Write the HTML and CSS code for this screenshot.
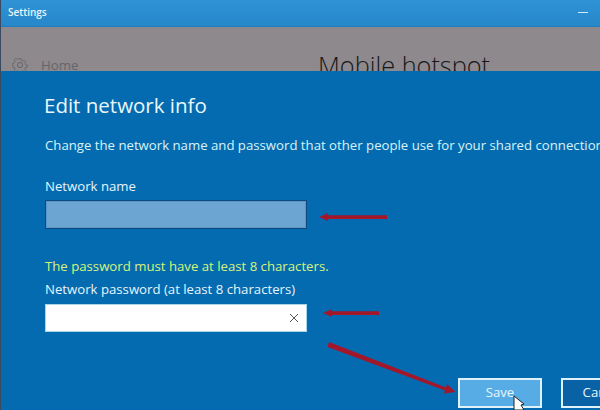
FILE: index.html
```html
<!DOCTYPE html>
<html lang="en">
<head>
<meta charset="utf-8">
<title>Settings</title>
<link rel="stylesheet" href="styles.css">
</head>
<body>
<div class="window">
  <header class="titlebar">
    <span class="app-name">Settings</span>
    <span class="minimize"></span>
  </header>
  <section class="backdrop">
    <div class="home">
      <svg class="gear" width="16" height="16" viewBox="0 0 16 16" fill="none" stroke="#66666a" stroke-width="1">
        <circle cx="8" cy="8" r="2.6"/>
        <path d="M6.8 1h2.4l.4 2 1.500.7 1.800-1.100 1.600 1.700-1.100 1.700.7 1.600 2 .4v2.300l-2 .4-.7 1.600 1.100 1.700-1.600 1.700-1.800-1.100-1.500.7-.4 2H6.800l-.4-2-1.500-.7-1.800 1.100-1.600-1.700 1.100-1.700-.7-1.600-2-.4V6l2-.4.7-1.600-1.100-1.700 1.600-1.700 1.800 1.100 1.500-.7z" transform="translate(.8 .8) scale(.9)"/>
      </svg>
      <span class="home-label">Home</span>
    </div>
    <h2 class="page-title">Mobile hotspot</h2>
  </section>
  <main class="dialog">
    <h1 class="dialog-title">Edit network info</h1>
    <p class="intro">Change the network name and password that other people use for your shared connection.</p>
    <label class="field-label">Network name</label>
    <div class="input input-name"></div>
    <p class="warning">The password must have at least 8 characters.</p>
    <label class="field-label field-label-tight">Network password (at least 8 characters)</label>
    <div class="input input-password">
      <svg width="10" height="10" viewBox="0 0 10 10" stroke="#555" stroke-width="1"><path d="M1 1l8 8M9 1l-8 8"/></svg>
    </div>
    <div class="actions">
      <button class="btn btn-save">Save</button>
      <button class="btn btn-cancel">Cancel</button>
    </div>
  </main>
  <svg class="annotations" width="600" height="410" viewBox="0 0 600 410">
    <g fill="#a3172b" stroke="none">
      <path d="M319 217l9-4v2.200h59v3.800h-59v2z"/>
      <path d="M323 313l9-4v2.200h47v3.800h-47v2z"/>
      <path d="M327.500 347l1.500-5 117 45.500 1-3.500 8.500 8-11.500 1.500 1-3z"/>
    </g>
    <path class="cursor" d="M514 396v14h10l-3-5 3-1z" fill="#fff" stroke="#222" stroke-width="1"/>
  </svg>
</div>
</body>
</html>
```

FILE: styles.css
```css
html, body {
  margin: 0;
  padding: 0;
}

body {
  width: 600px;
  height: 410px;
  overflow: hidden;
  font-family: "Open Sans", "Noto Sans", sans-serif;
}

.window {
  position: relative;
  width: 600px;
  height: 410px;
  overflow: hidden;
  display: flex;
  flex-direction: column;
  background: #056bb0;
  border-left: 1px solid #3a4a60;
  box-sizing: border-box;
}

.titlebar {
  height: 27px;
  flex: none;
  display: flex;
  align-items: center;
  justify-content: space-between;
  padding: 0 12px 2px 7px;
  box-sizing: border-box;
  background: linear-gradient(#2f93d6, #2687c9);
  border-bottom: 1px solid #1f7cbd;
}

.app-name {
  color: #e8f4fb;
  font-size: 10px;
  font-weight: 600;
}

.minimize {
  width: 10px;
  height: 1px;
  background: #cfeaf8;
}

.backdrop {
  height: 44px;
  flex: none;
  overflow: hidden;
  background: #8d898c;
  display: flex;
  padding: 28px 0 0 11px;
  box-sizing: border-box;
}

.home {
  display: flex;
  align-items: flex-start;
  gap: 13px;
  width: 306px;
  flex: none;
}

.gear {
  flex: none;
  margin-top: 2px;
}

.home-label {
  color: #66666a;
  font-size: 13.300px;
  line-height: 20px;
}

.page-title {
  margin: -6px 0 0;
  color: #17171a;
  font-size: 25.300px;
  font-weight: 300;
  line-height: 32px;
  white-space: nowrap;
}

.dialog {
  flex: 1;
  padding: 19px 0 0 44px;
  color: #e6f5fb;
  min-width: 0;
}

.dialog-title {
  margin: 0 0 0 -1px;
  color: #e8f7fc;
  font-size: 20.500px;
  font-weight: 400;
  line-height: 30px;
}

.intro {
  margin: 16px 0 0;
  color: #d8f3f7;
  font-size: 13.200px;
  line-height: 18px;
  white-space: nowrap;
}

.field-label {
  display: block;
  font-size: 13.200px;
  line-height: 18px;
}

.intro + .field-label {
  margin-top: 23px;
}

.input {
  width: 262px;
  height: 29px;
  box-sizing: border-box;
  margin-top: 5px;
}

.input-name {
  background: #6ca5d1;
  border: 1px solid #0e4a80;
  box-shadow: inset 0 0 0 1px #5a97c6;
}

.warning {
  margin: 28px 0 0;
  color: #d5f47a;
  font-size: 13.200px;
  line-height: 18px;
}

.field-label-tight {
  margin-top: 5px;
}

.input-password {
  height: 28px;
  margin-top: 6px;
  background: #fff;
  border: 1px solid #a9d5ec;
  display: flex;
  align-items: center;
  justify-content: flex-end;
  padding-right: 7px;
}

.actions {
  position: absolute;
  left: 457px;
  top: 378px;
  display: flex;
  gap: 19px;
}

.btn {
  width: 84px;
  height: 30px;
  box-sizing: border-box;
  border: 2px solid #dff2fa;
  font-family: inherit;
  font-size: 13.200px;
  color: #e8f7fc;
  padding: 0 0 2px;
}

.btn-save {
  background: #58ace6;
}

.btn-cancel {
  background: #0a62a6;
}

.annotations {
  position: absolute;
  left: -1px;
  top: 0;
  pointer-events: none;
}
```
